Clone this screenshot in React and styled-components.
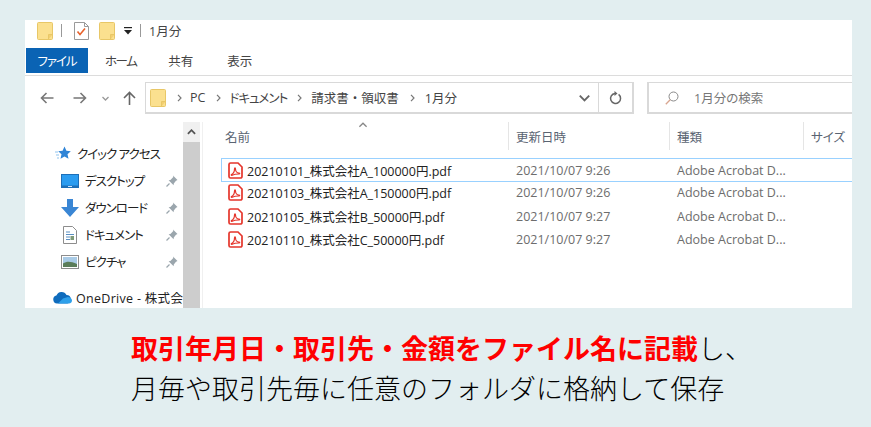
import React from "react";
import styled, { createGlobalStyle } from "styled-components";

const GlobalStyle = createGlobalStyle`
  html, body { margin: 0; padding: 0; background: #e2eef0; }
  body { font-family: "Open Sans", "Noto Sans CJK JP", sans-serif; }
  svg { flex: none; display: block; }
`;

const Page = styled.div`
  width: 871px;
  height: 427px;
  box-sizing: border-box;
  padding-top: 20px;
  overflow: hidden;
  background: #e2eef0;
`;

const Explorer = styled.div`
  width: 827px;
  height: 288px;
  margin-left: 25px;
  background: #fff;
  display: flex;
  flex-direction: column;
  overflow: hidden;
  font-size: 12.5px;
  font-feature-settings: "palt";
  color: #333;
`;

const TitleBar = styled.div`
  height: 27px;
  flex: none;
  display: flex;
  align-items: center;
  padding: 0 0 6px 12px;
  box-sizing: border-box;
`;

const TitleSep = styled.span`
  width: 1px;
  height: 13px;
  background: #999;
  margin: 0 ${(p) => p.$right}px 0 ${(p) => p.$left}px;
`;

const TitleText = styled.span`
  margin-left: 8px;
  color: #444;
`;

const Tabs = styled.div`
  height: 29px;
  flex: none;
  box-sizing: border-box;
  display: flex;
  padding-left: 1px;
  border-bottom: 1px solid #dcdcdc;
`;

const FileTab = styled.div`
  width: 62px;
  height: 25px;
  margin-top: 1px;
  background: #0a63b4;
  color: #fff;
  letter-spacing: -1px;
  display: flex;
  align-items: center;
  justify-content: center;
`;

const Tab = styled.div`
  margin-left: ${(p) => p.$left}px;
  letter-spacing: ${(p) => p.$spacing || 0}px;
  display: flex;
  align-items: center;
  height: 24px;
  margin-top: 1px;
  color: #444;
`;

const NavBar = styled.div`
  height: 32px;
  flex: none;
  margin-top: 6px;
  display: flex;
  align-items: center;
  padding-left: 15px;
  color: #6d6d6d;
`;

const NavIcon = styled.span`
  display: flex;
  margin-left: ${(p) => p.$left || 0}px;
  margin-right: ${(p) => p.$right || 0}px;
`;

const AddressBox = styled.div`
  width: 489px;
  height: 32px;
  box-sizing: border-box;
  border: 1px solid #d9d9d9;
  border-width: 1px 2px 2px 1px;
  display: flex;
  align-items: center;
  padding-left: 4px;
`;

const Crumb = styled.span`
  color: #444;
  margin-left: ${(p) => p.$left}px;
  letter-spacing: ${(p) => p.$spacing || 0}px;
  font-feature-settings: ${(p) => (p.$fullWidth ? "normal" : "palt")};
  white-space: nowrap;
`;

const CrumbArrow = styled.span`
  display: flex;
  margin-left: ${(p) => p.$left}px;
`;

const AddressTools = styled.div`
  margin-left: auto;
  height: 100%;
  display: flex;
  align-items: center;
`;

const RefreshCell = styled.div`
  width: 34px;
  height: 100%;
  box-sizing: border-box;
  border-left: 1px solid #d9d9d9;
  margin-left: 8px;
  display: flex;
  align-items: center;
  justify-content: center;
`;

const SearchBox = styled.div`
  width: 205px;
  height: 32px;
  margin-left: 13px;
  box-sizing: border-box;
  border: 1px solid #d9d9d9;
  border-width: 1px 0 2px 2px;
  display: flex;
  align-items: center;
  padding-left: 16px;
  color: #777;
`;

const SearchLabel = styled.span`
  margin-left: 15px;
`;

const Body = styled.div`
  flex: 1;
  display: flex;
  min-height: 0;
  padding-top: 8px;
`;

const Sidebar = styled.div`
  width: 178px;
  flex: none;
  display: flex;
  border-right: 1px solid #f0f0f0;
  box-sizing: border-box;
`;

const NavList = styled.div`
  width: 158px;
  flex: none;
  overflow: hidden;
  padding-top: 18px;
`;

const NavRow = styled.div`
  height: 27px;
  display: flex;
  align-items: center;
  padding-left: ${(p) => p.$indent}px;
  margin-top: ${(p) => p.$top || 0}px;
  white-space: nowrap;
  color: #222;
`;

const NavLabel = styled.span`
  margin-left: ${(p) => p.$gap}px;
  letter-spacing: ${(p) => p.$spacing}px;
  flex: 1;
`;

const PinSlot = styled.span`
  display: flex;
  width: 17px;
  flex: none;
`;

const NavIconSlot = styled.span`
  width: 18px;
  display: flex;
  justify-content: center;
  flex: none;
`;

const Scrollbar = styled.div`
  width: 17px;
  flex: none;
  display: flex;
  flex-direction: column;
  background: #f0f0f0;
`;

const ScrollUp = styled.div`
  height: 20px;
  flex: none;
  display: flex;
  align-items: center;
  justify-content: center;
`;

const ScrollThumb = styled.div`
  flex: 1;
  background: #cdcdcd;
`;

const FileArea = styled.div`
  flex: 1;
  min-width: 0;
`;

const Columns = styled.div`
  display: grid;
  grid-template-columns: 288px 161px 134px 1fr;
  margin-left: 18px;
`;

const HeaderCell = styled.div`
  position: relative;
  height: 28px;
  box-sizing: border-box;
  display: flex;
  align-items: center;
  padding-left: ${(p) => p.$pad}px;
  padding-top: 1px;
  color: #5a6472;
  border-right: ${(p) => (p.$last ? "none" : "1px solid #e5e5e5")};
`;

const SortArrow = styled.span`
  position: absolute;
  left: 137px;
  top: 0;
  display: flex;
`;

const FileList = styled.div`
  margin-top: 8px;
`;

const FileRow = styled(Columns)`
  height: ${(p) => (p.$selected ? 24 : 23.5)}px;
  margin-bottom: ${(p) => (p.$selected ? -1 : 0)}px;
  box-sizing: border-box;
  align-items: center;
  border: 1px solid ${(p) => (p.$selected ? "#99d1ff" : "transparent")};
  border-right: none;
`;

const NameCell = styled.div`
  display: flex;
  align-items: center;
  padding-left: 6px;
  color: #222;
  white-space: nowrap;
`;

const FileName = styled.span`
  margin-left: 4px;
`;

const MetaCell = styled.div`
  padding-left: 6px;
  color: #6d6d6d;
  white-space: nowrap;
`;

const Caption = styled.div`
  margin-top: 20px;
  padding-left: 131px;
  font-family: "Noto Sans CJK JP", sans-serif;
  font-size: 27px;
  line-height: 40px;
  color: #000;
  font-weight: 300;
  white-space: nowrap;
`;

const Accent = styled.span`
  color: #f00;
  font-weight: 700;
`;

const FolderIcon = () => (
  <svg width="16" height="18" viewBox="0 0 16 18">
    <rect x="0.5" y="0.5" width="15" height="17" rx="1" fill="#fbe08f" stroke="#e8c767" />
    <path d="M11.5 17.5v-5h4" fill="#f3cf70" stroke="#e8c767" />
  </svg>
);

const CheckDocIcon = () => (
  <svg width="15" height="18" viewBox="0 0 15 18">
    <path d="M.5.5h10l4 4v13H.5z" fill="#fff" stroke="#9a9a9a" />
    <path d="M10.5.5v4h4" fill="none" stroke="#9a9a9a" />
    <path d="M3.5 9.5l2.5 3 5-6" fill="none" stroke="#e8622c" strokeWidth="1.6" />
  </svg>
);

const QuickDrop = () => (
  <svg width="8" height="8" viewBox="0 0 8 8">
    <rect x="0" y="0" width="8" height="1.2" fill="#222" />
    <path d="M0 3h8L4 7.5z" fill="#222" />
  </svg>
);

const ArrowLeft = ({ flip, color = "#777" }) => (
  <svg width="14" height="12" viewBox="0 0 14 12" style={flip ? { transform: "scaleX(-1)" } : undefined}>
    <path d="M13.5 6H1.5M6.5 1l-5 5 5 5" fill="none" stroke={color} strokeWidth="1.6" />
  </svg>
);

const ArrowUp = () => (
  <svg width="13" height="14" viewBox="0 0 13 14">
    <path d="M6.5 14V1.5M1 7l5.5-5.5L12 7" fill="none" stroke="#666" strokeWidth="1.6" />
  </svg>
);

const SmallChevron = ({ w = 7, h = 5, color = "#999", sw = 1.3, up }) => (
  <svg width={w} height={h} viewBox="0 0 7 5" style={up ? { transform: "scaleY(-1)" } : undefined}>
    <path d="M.5 1l3 3 3-3" fill="none" stroke={color} strokeWidth={sw} />
  </svg>
);

const CrumbChevron = () => (
  <svg width="5" height="8" viewBox="0 0 5 8">
    <path d="M1 .8l3 3.2-3 3.2" fill="none" stroke="#777" strokeWidth="1.2" />
  </svg>
);

const RefreshIcon = () => (
  <svg width="13" height="14" viewBox="0 0 13 14">
    <path d="M9.6 3.4a5 5 0 1 1-3.6-1" fill="none" stroke="#666" strokeWidth="1.5" />
    <path d="M5.5 0v5l3-2.5z" fill="#666" />
  </svg>
);

const SearchIcon = () => (
  <svg width="14" height="14" viewBox="0 0 14 14">
    <circle cx="8.5" cy="5.5" r="4.5" fill="none" stroke="#8a8a8a" />
    <path d="M5.2 8.8L.8 13.2" stroke="#d8a58f" strokeWidth="1.3" />
  </svg>
);

const QuickStar = () => (
  <svg width="16" height="15" viewBox="0 0 16 15">
    <path d="M9.5.5l1.9 4.3 4.4.4-3.3 3 1 4.6-4-2.4-4 2.4 1-4.6-3.3-3 4.4-.4z" fill="#2f84d6" />
    <path d="M0 6h3M1 9h3M2 12h2" stroke="#8fc3ee" strokeWidth="1" />
  </svg>
);

const DesktopIcon = () => (
  <svg width="18" height="14" viewBox="0 0 18 14">
    <rect width="18" height="14" fill="#1d6fb8" />
    <rect x="1" y="1" width="16" height="10.5" fill="#2b9cf0" />
    <rect x="7" y="12" width="4" height="1" fill="#cfe6fa" />
  </svg>
);

const DownloadIcon = () => (
  <svg width="18" height="18" viewBox="0 0 18 18">
    <path d="M6 0h6v8h6l-9 10L0 8h6z" fill="#3a86d4" />
  </svg>
);

const DocumentIcon = () => (
  <svg width="14" height="18" viewBox="0 0 14 18">
    <path d="M.5.5h9l4 4v13H.5z" fill="#fff" stroke="#8d8d8d" />
    <path d="M3 6h4M3 8.5h8M3 11h4M3 13.5h4" stroke="#5b8fc2" />
    <rect x="7.5" y="10" width="3.5" height="4" fill="#7f9a78" />
  </svg>
);

const PictureIcon = () => (
  <svg width="18" height="14" viewBox="0 0 18 14">
    <rect x=".5" y=".5" width="17" height="13" fill="#fff" stroke="#8d8d8d" />
    <rect x="2" y="2" width="14" height="10" fill="#a9cbe6" />
    <path d="M2 8.5c4-2.5 8-2 14 .5v3H2z" fill="#5b7d5a" />
  </svg>
);

const CloudIcon = () => (
  <svg width="20" height="13" viewBox="0 0 20 13">
    <path d="M5 12.5a4 4 0 0 1-.6-7.900A5.500 5.500 0 0 1 14.500 4a4.300 4.300 0 0 1 1 8.500z" fill="#0f6cbd" />
    <path d="M6 12.5l5-5 5-1.500c3 .5 4 2.500 4 3.500 0 2-1.500 3-3 3z" fill="#2ea0ea" />
  </svg>
);

const PinIcon = () => (
  <svg width="12" height="12" viewBox="0 0 12 12">
    <path d="M7 .5l4.500 4.500-1.500.8-2.200 2.700-.2 1.800-5-5 1.800-.2L7.300 2z" fill="#9ba6ad" />
    <path d="M3.500 8.500L.5 11.500" stroke="#9ba6ad" strokeWidth="1.3" />
  </svg>
);

const PdfIcon = () => (
  <svg width="15" height="17" viewBox="0 0 15 17">
    <path d="M2.500 1h7.500l4 4v9.500a1.500 1.500 0 0 1-1.500 1.500h-10A1.500 1.500 0 0 1 1 14.500v-12A1.500 1.500 0 0 1 2.500 1z" fill="#fff" stroke="#e5352b" strokeWidth="1.7" />
    <path d="M3.500 12.500c2-1 3-3.500 3-5.500 0-1.500 1-1.500 1 0 0 2 1.500 4 3.500 4 1 0 1 1 0 1-2.500 0-5 .3-6.800 1.200-1 .4-1.300-.2-.7-.7z" fill="none" stroke="#e5352b" strokeWidth="1.2" />
  </svg>
);

const navItems = [
  { label: "デスクトップ", icon: <DesktopIcon /> },
  { label: "ダウンロード", icon: <DownloadIcon /> },
  { label: "ドキュメント", icon: <DocumentIcon /> },
  { label: "ピクチャ", icon: <PictureIcon /> },
];

const files = [
  { name: "20210101_株式会社A_100000円.pdf", date: "2021/10/07 9:26", selected: true },
  { name: "20210103_株式会社A_150000円.pdf", date: "2021/10/07 9:26" },
  { name: "20210105_株式会社B_50000円.pdf", date: "2021/10/07 9:27" },
  { name: "20210110_株式会社C_50000円.pdf", date: "2021/10/07 9:27" },
];

const App = () => {
  return (
    <Page>
      <GlobalStyle />
      <Explorer>
        <TitleBar>
          <FolderIcon />
          <TitleSep $left={8} $right={12} />
          <CheckDocIcon />
          <NavIcon $left={10}>
            <FolderIcon />
          </NavIcon>
          <NavIcon $left={9}>
            <QuickDrop />
          </NavIcon>
          <TitleSep $left={8} $right={0} />
          <TitleText>1月分</TitleText>
        </TitleBar>
        <Tabs>
          <FileTab>ファイル</FileTab>
          <Tab $left={17} $spacing={-1.5}>ホーム</Tab>
          <Tab $left={32}>共有</Tab>
          <Tab $left={34}>表示</Tab>
        </Tabs>
        <NavBar>
          <NavIcon $right={19}><ArrowLeft /></NavIcon>
          <NavIcon $right={15}><ArrowLeft flip /></NavIcon>
          <NavIcon $right={14}><SmallChevron /></NavIcon>
          <NavIcon $right={9}><ArrowUp /></NavIcon>
          <AddressBox>
            <FolderIcon />
            <CrumbArrow $left={11}><CrumbChevron /></CrumbArrow>
            <Crumb $left={8}>PC</Crumb>
            <CrumbArrow $left={11}><CrumbChevron /></CrumbArrow>
            <Crumb $left={8} $spacing={-1}>ドキュメント</Crumb>
            <CrumbArrow $left={10}><CrumbChevron /></CrumbArrow>
            <Crumb $left={9} $fullWidth>請求書・領収書</Crumb>
            <CrumbArrow $left={11}><CrumbChevron /></CrumbArrow>
            <Crumb $left={10}>1月分</Crumb>
            <AddressTools>
              <SmallChevron w={11} h={8} color="#666" sw={1.2} />
              <RefreshCell><RefreshIcon /></RefreshCell>
            </AddressTools>
          </AddressBox>
          <SearchBox>
            <SearchIcon />
            <SearchLabel>1月分の検索</SearchLabel>
          </SearchBox>
        </NavBar>
        <Body>
          <Sidebar>
            <NavList>
              <NavRow $indent={30}>
                <QuickStar />
                <NavLabel $gap={6} $spacing={-1}>クイック アクセス</NavLabel>
              </NavRow>
              {navItems.map((item) => (
                <NavRow key={item.label} $indent={36}>
                  <NavIconSlot>{item.icon}</NavIconSlot>
                  <NavLabel $gap={6} $spacing={-1}>{item.label}</NavLabel>
                  <PinSlot><PinIcon /></PinSlot>
                </NavRow>
              ))}
              <NavRow $indent={27} $top={9}>
                <CloudIcon />
                <NavLabel $gap={4} $spacing={0.3}>OneDrive - 株式会</NavLabel>
              </NavRow>
            </NavList>
            <Scrollbar>
              <ScrollUp>
                <SmallChevron w={9} h={6} color="#555" sw={1.5} up />
              </ScrollUp>
              <ScrollThumb />
            </Scrollbar>
          </Sidebar>
          <FileArea>
            <Columns>
              <HeaderCell $pad={4}>
                <SortArrow>
                  <SmallChevron w={10} h={6} color="#888" sw={1.1} up />
                </SortArrow>
                名前
              </HeaderCell>
              <HeaderCell $pad={7}>更新日時</HeaderCell>
              <HeaderCell $pad={7}>種類</HeaderCell>
              <HeaderCell $pad={7} $last>サイズ</HeaderCell>
            </Columns>
            <FileList>
              {files.map((file) => (
                <FileRow key={file.name} $selected={file.selected}>
                  <NameCell>
                    <PdfIcon />
                    <FileName>{file.name}</FileName>
                  </NameCell>
                  <MetaCell>{file.date}</MetaCell>
                  <MetaCell>Adobe Acrobat D...</MetaCell>
                </FileRow>
              ))}
            </FileList>
          </FileArea>
        </Body>
      </Explorer>
      <Caption>
        <Accent>取引年月日・取引先・金額をファイル名に記載</Accent>し、
        <br />
        月毎や取引先毎に任意のフォルダに格納して保存
      </Caption>
    </Page>
  );
};

export default App;
